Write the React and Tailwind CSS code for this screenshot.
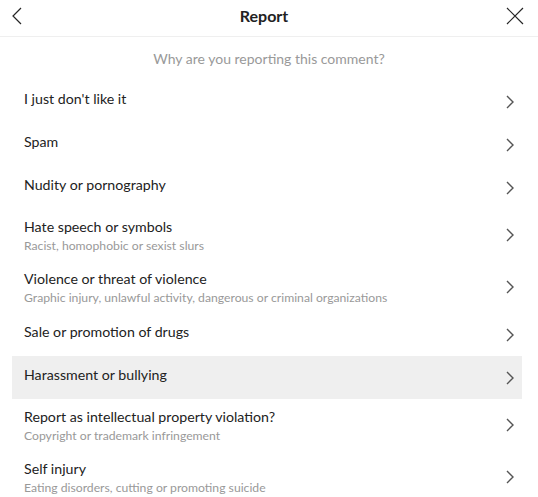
const items = [
  { title: "I just don't like it" },
  { title: 'Spam' },
  { title: 'Nudity or pornography' },
  { title: 'Hate speech or symbols', sub: 'Racist, homophobic or sexist slurs' },
  { title: 'Violence or threat of violence', sub: 'Graphic injury, unlawful activity, dangerous or criminal organizations' },
  { title: 'Sale or promotion of drugs' },
  { title: 'Harassment or bullying', active: true },
  { title: 'Report as intellectual property violation?', sub: 'Copyright or trademark infringement' },
  { title: 'Self injury', sub: 'Eating disorders, cutting or promoting suicide' },
];

function Chevron() {
  return (
    <svg width="8" height="14" viewBox="0 0 8 14" fill="none" className="shrink-0">
      <path d="M1 1l6 6-6 6" stroke="#555" strokeWidth="1.4" />
    </svg>
  );
}

export default function App() {
  return (
    <div className="w-[538px] h-[497px] overflow-hidden bg-white text-[#222] font-['Lato',sans-serif]">
      {/* Header */}
      <header className="h-[37px] pb-1 border-b border-[#efefef] flex items-center justify-between px-3">
        <svg width="10" height="18" viewBox="0 0 10 18" fill="none">
          <path d="M9 1L1 9l8 8" stroke="#262626" strokeWidth="1.2" />
        </svg>
        <span className="text-[16px] font-bold">Report</span>
        <svg width="18" height="18" viewBox="0 0 18 18" fill="none" className="mr-[2px]">
          <path d="M1 1l16 16M17 1L1 17" stroke="#262626" strokeWidth="1.2" />
        </svg>
      </header>

      <p className="h-[43px] flex items-center justify-center text-[14px] text-[#999]">
        Why are you reporting this comment?
      </p>

      <ul className="ml-3 mr-4">
        {items.map(({ title, sub, active }) => (
          <li
            key={title}
            className={`flex items-center justify-between pl-3 pr-2 ${sub ? 'h-[52px]' : 'h-[43px]'} ${active ? 'bg-[#efefef]' : ''}`}
          >
            <div className={`flex flex-col ${sub ? 'leading-[19px] mt-[1px]' : 'leading-[18px] -mt-[5px]'}`}>
              <span className="text-[14.2px]">{title}</span>
              {sub && <span className="text-[12.2px] text-[#999]">{sub}</span>}
            </div>
            <Chevron />
          </li>
        ))}
      </ul>
    </div>
  );
}
